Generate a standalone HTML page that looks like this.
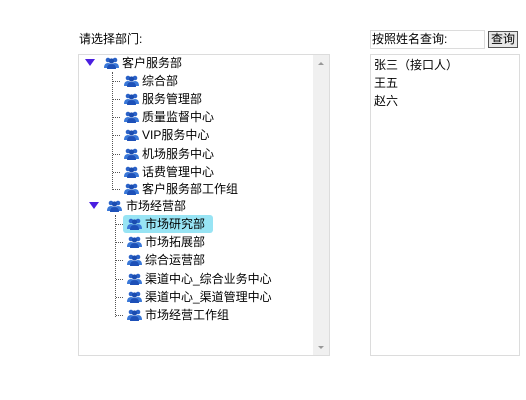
<!DOCTYPE html>
<html><head><meta charset="utf-8"><style>
body{margin:0;width:526px;height:400px;background:#fff;font:12px "Liberation Sans","Noto Sans CJK SC",sans-serif;color:#000;position:relative;overflow:hidden}
.a{position:absolute;white-space:nowrap;line-height:18px}
.box{position:absolute;border:1px solid #dcdcdc;box-sizing:border-box}
.ic{position:absolute;width:15px;height:12px}
.tri{position:absolute;width:0;height:0;border-left:5px solid transparent;border-right:5px solid transparent;border-top:7px solid #4a1ee0}
.vl{position:absolute;border-left:1px dotted #555;width:0}
.hl{position:absolute;border-top:1px dotted #555;height:0;width:7px}
</style></head><body>
<div class="a" style="left:79px;top:30px">请选择部门:</div>
<div class="box" style="left:78px;top:54px;width:252px;height:302px"></div>
<div style="position:absolute;left:313px;top:55px;width:16px;height:300px;background:#f0f0f0"></div>
<div style="position:absolute;left:318px;top:62px;border-left:3px solid transparent;border-right:3px solid transparent;border-bottom:3px solid #999"></div>
<div style="position:absolute;left:318px;top:346px;border-left:3px solid transparent;border-right:3px solid transparent;border-top:3px solid #999"></div>
<div style="position:absolute;left:123px;top:215px;width:90px;height:18px;background:#98e4f4;border-radius:3px"></div>
<svg width="0" height="0" style="position:absolute"><defs><g id="p"><circle cx="4" cy="3" r="2.3" fill="#2a62c8"/><circle cx="11" cy="3" r="2.3" fill="#2a62c8"/><circle cx="7.5" cy="4" r="2.6" fill="#1a4cb0"/><path d="M0 11 Q0 6 4 6 Q8 6 8 11Z M7 11 Q7 6 11 6 Q15 6 15 11Z" fill="#3a78d8"/><path d="M3 12 Q3 7 7.5 7 Q12 7 12 12Z" fill="#1d50b8"/></g></defs></svg>
<div id="t"></div>
<div class="vl" style="left:112px;top:72px;height:118px"></div>
<div class="vl" style="left:115px;top:215px;height:102px"></div>
<div class="box" style="left:370px;top:30px;width:115px;height:19px"></div>
<div class="a" style="left:372px;top:30px">按照姓名查询:</div>
<div style="position:absolute;left:488px;top:31px;width:30px;height:17px;box-sizing:border-box;border:1px solid #555;background:#e8e8e8;font-size:12px;line-height:15px;text-align:center">查询</div>
<div class="box" style="left:370px;top:54px;width:150px;height:302px"></div>
<div class="a" style="left:374px;top:56px">张三（接口人）</div>
<div class="a" style="left:374px;top:74px">王五</div>
<div class="a" style="left:374px;top:92px">赵六</div>
<script>
var rows=[[63,0,"客户服务部"],[81,1,"综合部"],[99,1,"服务管理部"],[117,1,"质量监督中心"],[135,1,"VIP服务中心"],[154,1,"机场服务中心"],[172,1,"话费管理中心"],[189,1,"客户服务部工作组"],[206,2,"市场经营部"],[224,3,"市场研究部"],[242,3,"市场拓展部"],[260,3,"综合运营部"],[279,3,"渠道中心_综合业务中心"],[297,3,"渠道中心_渠道管理中心"],[315,3,"市场经营工作组"]];
var h="";
rows.forEach(function(r){var y=r[0],k=r[1],ix,tx;
if(k==0){h+='<div class="tri" style="left:85px;top:'+(y-4)+'px"></div>';ix=104;tx=122;}
else if(k==2){h+='<div class="tri" style="left:89px;top:'+(y-4)+'px"></div>';ix=107;tx=126;}
else if(k==1){h+='<div class="hl" style="left:113px;top:'+y+'px"></div>';ix=124;tx=142;}
else{h+='<div class="hl" style="left:116px;top:'+y+'px"></div>';ix=127;tx=145;}
h+='<svg class="ic" style="left:'+ix+'px;top:'+(y-6)+'px" viewBox="0 0 15 12"><use href="#p"/></svg>';
h+='<div class="a" style="left:'+tx+'px;top:'+(y-9)+'px">'+r[2]+'</div>';});
document.getElementById("t").innerHTML=h;
</script>
</body></html>
